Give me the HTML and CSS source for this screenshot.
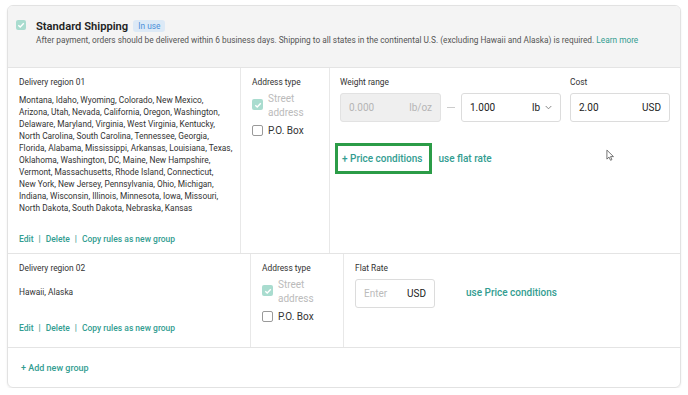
FILE: index.html
```html
<!DOCTYPE html>
<html>
<head>
<meta charset="utf-8">
<link rel="stylesheet" href="styles.css">
</head>
<body>
<div class="card">
  <div class="header">
    <span class="cb cb-on"><svg viewBox="0 0 10 10" width="10" height="10"><path d="M2.3 5.2 L4.2 7 L7.8 3.2" fill="none" stroke="#fff" stroke-width="1.4"/></svg></span>
    <div class="head-text">
      <div class="title-line"><span class="title">Standard Shipping</span><span class="badge">In use</span></div>
      <div class="desc">After payment, orders should be delivered within 6 business days. Shipping to all states in the continental U.S. (excluding Hawaii and Alaska) is required. <a class="link">Learn more</a></div>
    </div>
  </div>

  <div class="row row1">
    <div class="col region">
      <div class="label">Delivery region 01</div>
      <div class="states">Montana, Idaho, Wyoming, Colorado, New Mexico,<br>Arizona, Utah, Nevada, California, Oregon, Washington,<br>Delaware, Maryland, Virginia, West Virginia, Kentucky,<br>North Carolina, South Carolina, Tennessee, Georgia,<br>Florida, Alabama, Mississippi, Arkansas, Louisiana, Texas,<br>Oklahoma, Washington, DC, Maine, New Hampshire,<br>Vermont, Massachusetts, Rhode Island, Connecticut,<br>New York, New Jersey, Pennsylvania, Ohio, Michigan,<br>Indiana, Wisconsin, Illinois, Minnesota, Iowa, Missouri,<br>North Dakota, South Dakota, Nebraska, Kansas</div>
      <div class="actions"><a class="link">Edit</a><span class="sep">|</span><a class="link">Delete</a><span class="sep">|</span><a class="link">Copy rules as new group</a></div>
    </div>
    <div class="col addr">
      <div class="label">Address type</div>
      <div class="opt opt-street">
        <span class="cb cb-on small"><svg viewBox="0 0 10 10" width="10" height="10"><path d="M2.3 5.2 L4.2 7 L7.8 3.2" fill="none" stroke="#fff" stroke-width="1.4"/></svg></span>
        <span class="opt-text disabled">Street<br>address</span>
      </div>
      <div class="opt opt-po">
        <span class="cb cb-off small"></span>
        <span class="opt-text">P.O. Box</span>
      </div>
    </div>
    <div class="col rates">
      <div class="fields">
        <div class="field">
          <div class="label">Weight range</div>
          <div class="weights">
            <div class="input input-dis"><span class="val">0.000</span><span class="unit">lb/oz</span></div>
            <span class="dash"></span>
            <div class="input"><span class="val">1.000</span><span class="unit">lb <svg class="chev" viewBox="0 0 8 5" width="7" height="5"><path d="M0.8 0.8 L4 4 L7.2 0.8" fill="none" stroke="#777" stroke-width="1"/></svg></span></div>
          </div>
        </div>
        <div class="field">
          <div class="label">Cost</div>
          <div class="input"><span class="val">2.00</span><span class="unit">USD</span></div>
        </div>
      </div>
      <div class="cond-line">
        <a class="link bold hl">+ Price conditions</a>
        <a class="link bold">use flat rate</a>
      </div>
      <svg class="cursor" viewBox="0 0 10 14" width="9" height="13"><path d="M1 1 L1 11 L3.4 8.8 L5 12.3 L6.6 11.6 L5 8.2 L8.3 8.2 Z" fill="#fff" stroke="#555" stroke-width="0.9" stroke-linejoin="round"/></svg>
    </div>
  </div>

  <div class="row row2">
    <div class="col region">
      <div class="label">Delivery region 02</div>
      <div class="states one">Hawaii, Alaska</div>
      <div class="actions"><a class="link">Edit</a><span class="sep">|</span><a class="link">Delete</a><span class="sep">|</span><a class="link">Copy rules as new group</a></div>
    </div>
    <div class="col addr">
      <div class="label">Address type</div>
      <div class="opt opt-street">
        <span class="cb cb-on small"><svg viewBox="0 0 10 10" width="10" height="10"><path d="M2.3 5.2 L4.2 7 L7.8 3.2" fill="none" stroke="#fff" stroke-width="1.4"/></svg></span>
        <span class="opt-text disabled">Street<br>address</span>
      </div>
      <div class="opt opt-po">
        <span class="cb cb-off small"></span>
        <span class="opt-text">P.O. Box</span>
      </div>
    </div>
    <div class="col rates flat">
      <div class="field">
        <div class="label">Flat Rate</div>
        <div class="input input-flat"><span class="val ph">Enter</span><span class="unit">USD</span></div>
      </div>
      <a class="link bold use-pc">use Price conditions</a>
    </div>
  </div>

  <div class="footer"><a class="link">+ Add new group</a></div>
</div>
</body>
</html>
```

FILE: styles.css
```css
* { box-sizing: border-box; }
body {
  margin: 0;
  background: #fff;
  font-family: Roboto, "Noto Sans", sans-serif;
  color: #333;
  font-size: 9px;
}
.card {
  margin: 5px 7px 0 7px;
  width: 674px;
  height: 383px;
  border: 1px solid #e2e2e2;
  border-radius: 6px;
  box-shadow: 0 1px 2px rgba(0,0,0,0.08);
  overflow: hidden;
  display: flex;
  flex-direction: column;
}
.header {
  background: #f4f4f4;
  height: 62px;
  border-bottom: 1px solid #e4e4e4;
  display: flex;
  align-items: flex-start;
  padding: 13px 0 0 8px;
  white-space: nowrap;
}
.cb {
  display: inline-flex;
  align-items: center;
  justify-content: center;
  width: 10px;
  height: 10px;
  border-radius: 2px;
  flex: none;
}
.cb-on { background: #a9dccf; }
.cb-off { background: #fff; border: 1px solid #9a9a9a; }
.cb.small { width: 11px; height: 11px; }
.header .cb { margin-top: 1px; }
.head-text { margin-left: 10px; }
.title-line { display: flex; align-items: center; height: 14px; }
.title { font-size: 11.2px; font-weight: 600; color: #222; }
.badge {
  margin-left: 5px;
  background: #dce9f6;
  color: #4a8fd8;
  font-size: 8.3px;
  padding: 1px 5px;
  border-radius: 3px;
  line-height: 10px;
}
.desc { margin-top: 1px; font-size: 8.3px; color: #555; line-height: 12px; }
.link { color: #339d91; text-decoration: none; }
.bold { font-weight: 500; }

.row { display: grid; border-bottom: 1px solid #e4e4e4; }
.row1 { grid-template-columns: 233px 89px 1fr; height: 186px; }
.row2 { grid-template-columns: 243px 93px 1fr; height: 94px; }
.col { border-right: 1px solid #e8e8e8; padding: 8px 0 0 11px; }
.col.rates { border-right: none; }

.label { font-size: 8.4px; line-height: 12px; color: #333; }
.region { display: flex; flex-direction: column; padding-bottom: 8px; white-space: nowrap; }
.row2 .region { padding-bottom: 13px; }
.states { margin-top: 6px; font-size: 8.35px; line-height: 12px; color: #333; }
.states.one { margin-top: 12px; }
.actions { margin-top: auto; font-size: 8.5px; line-height: 12px; font-weight: 500; }
.sep { color: #339d91; margin: 0 5px; }

.opt { display: flex; align-items: flex-start; }
.opt-street { margin-top: 4px; }
.opt-street .cb { margin-top: 7px; }
.opt-po { margin-top: 4px; }
.opt-po .cb { margin-top: 1px; }
.opt-text { margin-left: 5px; font-size: 10px; line-height: 14px; color: #333; }
.opt-text.disabled { color: #bbb; }

.rates { position: relative; padding-left: 10px; }
.fields { display: flex; gap: 9px; }
.weights { display: flex; align-items: center; margin-top: 5px; }
.field > .input { margin-top: 5px; }
.input {
  width: 100px;
  height: 29px;
  border: 1px solid #dcdcdc;
  border-radius: 3px;
  display: flex;
  align-items: center;
  justify-content: space-between;
  padding: 0 8px 0 8px;
  font-size: 10px;
  color: #222;
  background: #fff;
}
.input-dis { width: 101px; background: #efefef; color: #b5b5b5; border-color: #e2e2e2; }
.input-dis .unit { color: #b5b5b5; }
.dash { width: 8px; height: 1px; background: #ccc; margin: 0 6px; }
.unit { display: flex; align-items: center; gap: 5px; }
.chev { display: block; }

.cond-line { margin-top: 31px; display: flex; gap: 16px; font-size: 10px; line-height: 12px; padding-left: 2px; }
.hl { position: relative; }
.hl::before {
  content: "";
  position: absolute;
  left: -7px;
  right: -10px;
  top: -10px;
  bottom: -9px;
  border: 3px solid #2b9c47;
}
.cursor { position: absolute; left: 276px; top: 81px; }

.row2 .rates { display: flex; align-items: flex-start; padding-left: 11px; }
.input-flat { width: 80px; height: 29px; margin-top: 4px; }
.ph { color: #bbb; }
.use-pc { margin-left: 31px; margin-top: 25px; font-size: 10px; line-height: 12px; }

.footer { padding: 15px 0 0 13px; font-size: 9px; font-weight: 500; }
```
